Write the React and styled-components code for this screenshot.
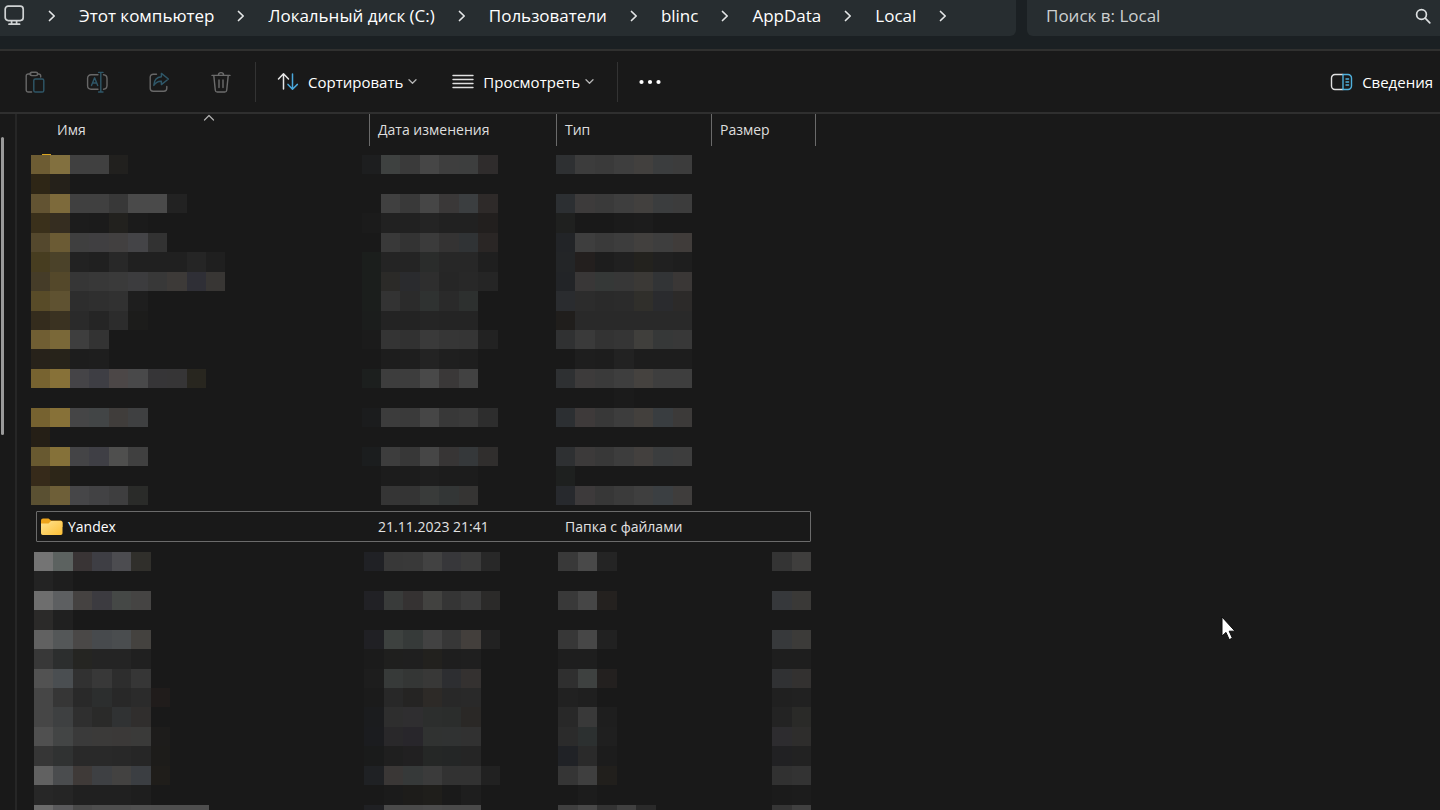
import React from 'react'
import styled, { createGlobalStyle } from 'styled-components'

const GlobalStyle = createGlobalStyle`
  * {
    box-sizing: border-box;
  }
  body {
    margin: 0;
    overflow: hidden;
    background: #191919;
    color: #fff;
    font-family: "Open Sans", "Noto Sans", sans-serif;
  }
  button, input {
    font-family: inherit;
    color: inherit;
    background: none;
    border: none;
    padding: 0;
    margin: 0;
  }
`

const Window = styled.div`
  height: 100vh;
  display: flex;
  flex-direction: column;
  overflow: hidden;
`
const TopBar = styled.header`
  display: flex;
  gap: 11px;
  height: 51px;
  flex-shrink: 0;
  padding-bottom: 13px;
  background: #1b2023;
  border-bottom: 2px solid #30302f;
`
const AddressBar = styled.nav`
  flex: 1;
  display: flex;
  align-items: center;
  gap: 23px;
  height: 36px;
  padding: 0 0 4px 4px;
  background: #272d30;
  border-radius: 0 0 6px 0;
`
const Crumb = styled.a`
  font-size: 17px;
  line-height: 24px;
  color: #fff;
  text-decoration: none;
  white-space: nowrap;
`
const SearchBox = styled.label`
  display: flex;
  align-items: center;
  width: 413px;
  height: 36px;
  padding: 0 9px 4px 19px;
  background: #272d30;
  border-radius: 0 0 0 6px;
`
const SearchInput = styled.input`
  flex: 1;
  min-width: 0;
  font-size: 17px;
  line-height: 24px;
  outline: none;
  &::placeholder {
    color: #cdd0d1;
    opacity: 1;
  }
`
const Toolbar = styled.div`
  display: flex;
  align-items: center;
  height: 63px;
  flex-shrink: 0;
  padding: 0 7px 0 24px;
  border-bottom: 2px solid #2f2f2f;
`
const IconGroup = styled.div`
  display: flex;
  gap: 40px;
`
const IconButton = styled.button`
  display: flex;
  opacity: ${(props) => (props.disabled ? 0.45 : 1)};
`
const Divider = styled.span`
  width: 1px;
  height: 40px;
  margin: 0 21px 0 23px;
  background: #333;
`
const TextButton = styled.button`
  display: flex;
  align-items: center;
  gap: 9px;
  font-size: 15px;
  line-height: 22px;
  margin-right: ${(props) => (props.$spaced ? '35px' : '0')};
  margin-left: ${(props) => (props.$right ? 'auto' : '0')};
`
const DropLabel = styled.span`
  display: flex;
  align-items: center;
  gap: 5px;
`
const Body = styled.div`
  flex: 1;
  min-height: 0;
  display: flex;
`
const Side = styled.aside`
  width: 17px;
  padding: 23px 0 0 1px;
  border-right: 2px solid #262626;
`
const Thumb = styled.div`
  width: 3px;
  height: 298px;
  border-radius: 2px;
  background: #9a9a9a;
`
const Files = styled.table`
  width: 799px;
  height: max-content;
  table-layout: fixed;
  border-collapse: separate;
  border-spacing: 0;
  font-size: 14px;
  line-height: 20px;
`
const Head = styled.th`
  position: relative;
  width: ${(props) => props.$w};
  height: 32px;
  padding: 0 0 0 ${(props) => (props.$first ? '40px' : '8px')};
  text-align: left;
  font-weight: 400;
  color: #dedede;
  border-right: 1px solid #6a6a6a;
`
const SortMark = styled.span`
  position: absolute;
  top: 0;
  left: 186px;
  display: flex;
`
const Row = styled.tr`
  position: relative;
  height: 31px;
  &::after {
    content: "";
    position: absolute;
    top: 0;
    bottom: 0;
    left: 19px;
    right: 5px;
    border: 1px solid #6b6b6b;
    border-radius: 1px;
  }
`
const Cell = styled.td`
  padding: 0 0 0 8px;
  color: #e2e2e2;
  white-space: nowrap;
`
const NameCell = styled(Cell)`
  padding-left: 24px;
  color: #fff;
`
const FileName = styled.div`
  display: flex;
  align-items: center;
  gap: 5px;
`
const MosaicCell = styled.td`
  padding: ${(props) => (props.$last ? '10px 0 0 17px' : '9px 0 6px 14px')};
`
const Blocks = styled.svg`
  display: block;
  overflow: visible;
`

const crumbs = ['Этот компьютер', 'Локальный диск (C:)', 'Пользователи', 'blinc', 'AppData', 'Local']

// name | date | type | size, "." is an empty block, two digits are a grey
const columnStart = [0, 17, 27, 38]

const folders = [
  '6d5c33 82703f 40 40 21201e | 1d1e1f 3e4140 3a 46 3e 3d3e3e 2f2c2c | 2e3032 3c 3a 3e 42403e 3b3d3e 3c',
  '2e2616 25211a',
  '625332 7d6a3b 40 40 38 4a 4a 22 | . 40 39 46 3a3838 3b3e40 2e2a29 | 2c2f32 3d3b3b 3a 3e 42403e 3b3d3e 3c',
  '3a301b 352d20 1c 1b 22211e 1b | 1b 21 21 24 21 21 221f1e | 1f201f . . 1b 1c',
  '54482d 6b5b34 3f 403f41 424040 444447 32 | . 39 33 3b 343333 303335 2a2625 | 222427 3e 3a 3d 42403e 3e 403c3a',
  '473d20 4b4229 22 20 28 20 20 20 25 1f | 1b1e1c 24 24 2a2c2b 27 27 1f | 232527 231f1e 1d 20 23221e 20 1e',
  '453c28 54482a 36 38 3a 3c3c3e 38 3d3a38 2f2f36 383634 | 1b1e1c 2b2a28 2a2b2e 2e 26 28 25 | 222427 393737 353837 37 3b3936 323436 3a3736',
  '584b28 5f5231 2d 2f 31 1e | 1b1e1c 33 2b 2f3231 2a 2d302f | 2a2c2f 2c 2a 2b 302f2b 2a2b2e 2c2a29',
  '342c1d 3a3221 2a 25 2c 1c1c1b | 1b1d1c 23 23 25 24 24 | 201e1c 29 29 29 29 29 29',
  '705e33 7a6838 3e 33 | 1b 34 31 3a 36 35 22 | 303132 3a 33 35 403f3c 363838 38',
  '27221a 27231a 1d 1e | . 1d 1e 23 1f 1e | . 1e 1d 22 1d 1d 1d',
  '776330 877138 454447 3e3e44 4c4747 49494a 363537 363536 28261f | 1c1f1e 3d 3d 49 3a3838 42 | 2e3032 3d3b3b 3a 3e 45423f 3e 3e',
  '. | . | . . . 1b',
  '766230 877138 454546 424546 403d3b 3f4041 | 1b1c1d 3c 3a 46 38 3a 2d | 2c2f32 3e3a3a 38 3d 43403d 393d40 3c3a39',
  '251f16',
  '685930 857139 444446 3f3f45 4f4f4e 40 | 1b1d1e 3d 37 46 373535 35383a 302e2d | 2e3032 3c3a3a 38 3d 43403e 3b3d3e 3d',
  '362a1a 2d2618 | . 1c 1c 1e 1c 1c | 1e201f',
  '5a5032 6e5f38 464648 424244 3e3e3f 2a2b29 | . 35 34 393b3a 333636 353433 | 27292d 3d3a3b 37 3b 3f 3b3f42 3f3d3c',
]

const files = [
  '747474 5c6260 393435 3e3e44 4c4c50 302f2b | 202125 38 39 42 37373a 3b 28 | 39 49 24 | 34 3f3e3d',
  '23 1e',
  '6e 5d5f61 454241 3c3b40 454846 454443 | 212125 393b3a 353232 424240 35 3b 2b2a29 | 39 46 24211f | 36383b 3a3937',
  '2b2a29 20',
  '61 545758 4a4847 474a4d 4a4d4f 44423f | 202024 3d413f 363a39 42 37 433f3c 22 | 37 47 21 | 37393b 3c3b39',
  '38 2c2e2e 252522 24 24 20 | 1b 1f1f1e 1f 22211e 1e 1f | 1e 1e | 1e 1e',
  '52 4a4e51 31 38 2d 36 | 1d 373a39 343635 383837 2d2e31 343130 | 2f 3e4140 23201f | 303133 333130',
  '46 36 29 2c2e2e 28 2b 201c1b | 1b 28 252423 2d2a27 28 29 | 21 1f | 20 21',
  '46 3e4041 2f 2a2a29 303233 302e2d | 1b1c1e 2e 2f2e30 2c2e2d 2b2d2c 2a2826 | 28 39 1e | 23 2a2a28',
  '50 434545 3a 3b3a39 3b3938 3a3a39 1d1c1b | 1b1c1f 29282a 28262b 303231 303232 31 | 2b 2c3030 1f | 2d2c2f 2e2d2c',
  '36 303232 29 29 28 26 1d1c1a | 1a1b1b 1f 212021 252726 242626 25 | 202226 2a 1c | 212123 22',
  '61 4a4c4e 3f3a38 3e4043 434241 3b3e42 1f1d1a | 1f2124 3a3736 363939 3b 32 32 21 | 35 3f 211f1c | 31 33',
  '27 25 20 20 20 1e | . 1b 1d1c1a 1f1e1b 1a 1e | . 1c | 1b 1c',
  '6b 5a5a5c 4a 4e 4e 50 4f 4e 4e | 1f2023 4a 4a 4c 4a 4a | 3f 48 33 40 2a | 35 40',
]

const toColor = (token) => '#' + (token.length === 2 ? token.repeat(3) : token)

const Mosaic = ({ rows, columns, width, height, children }) => (
  <Blocks
    width={width}
    height={height}
    viewBox={`0 0 ${columns} ${rows.length}`}
    preserveAspectRatio="none"
    shapeRendering="crispEdges"
    aria-hidden="true"
  >
    {children}
    {rows.map((row, y) =>
      row.split('|').map((part, col) =>
        part.trim().split(' ').map((token, x) =>
          token === '.' ? null : (
            <rect
              key={`${y}-${col}-${x}`}
              x={columnStart[col] + x}
              y={y}
              width="1"
              height="1"
              fill={toColor(token)}
            />
          )
        )
      )
    )}
  </Blocks>
)

const Svg = ({ w = 22, h = 22, children, stroke = '#fff', sw = 1.4 }) => (
  <svg width={w} height={h} viewBox={`0 0 ${w} ${h}`} fill="none" stroke={stroke} strokeWidth={sw}
    strokeLinecap="round" strokeLinejoin="round" aria-hidden="true">
    {children}
  </svg>
)

const ChevronRight = () => (
  <Svg w={8} h={12} sw={1.7} stroke="#e4e6e7"><path d="M1.5 1.5 6.2 6 1.5 10.5" /></Svg>
)
const ChevronDown = () => (
  <Svg w={9} h={8} sw={1.3} stroke="#b5b5b5"><path d="M1 1.8 4.5 5.2 8 1.8" /></Svg>
)
const MonitorIcon = () => (
  <Svg w={21} h={22} sw={1.7} stroke="#cfd2d3">
    <rect x="1.2" y="1.2" width="18" height="14.4" rx="3" />
    <path d="M7.6 15.8v3M12.6 15.8v3M5 19.200h10.6" />
  </Svg>
)
const PasteIcon = () => (
  <Svg stroke="#c8c8c8">
    <path d="M7 3H4.2A2 2 0 0 0 2.2 5v14a2 2 0 0 0 2 2h3.4M13.5 3h1.2a2 2 0 0 1 2 2v1" />
    <rect x="6" y="1.2" width="7.6" height="3.4" rx="1.6" />
    <rect x="9.8" y="8" width="10" height="13" rx="1.6" stroke="#4aa3c9" />
  </Svg>
)
const RenameIcon = () => (
  <Svg stroke="#c8c8c8">
    <path d="M12 3.8H5a3.4 3.4 0 0 0-3.4 3.4v7.6A3.4 3.4 0 0 0 5 18.200h7M17.500 3.800A3.800 3.800 0 0 1 21 7.500v7a3.800 3.800 0 0 1-3.500 3.700" />
    <path d="M5.500 14.600 8.600 6.800l3.100 7.800M6.600 12h4M14.800 1.600v19.200M12.600 1.400h4.400M12.600 21h4.400" stroke="#4aa3c9" />
  </Svg>
)
const ShareIcon = () => (
  <Svg stroke="#c8c8c8">
    <path d="M8.500 3.200H5.200a3 3 0 0 0-3 3v11a3 3 0 0 0 3 3h10.600a3 3 0 0 0 3-3v-1.800" />
    <path d="M13.400 2.400 20.400 8l-7 5.600v-3.400c-3.600-.2-5.800 1.200-7.600 4.200.2-5 2.800-8.200 7.600-8.600z" stroke="#4aa3c9" />
  </Svg>
)
const TrashIcon = () => (
  <Svg stroke="#d0d0d0">
    <path d="M2 4.400h18M8.400 4.200a2.600 2.600 0 0 1 5.200 0M3.800 4.600l1.500 14.600a2 2 0 0 0 2 1.800h7.400a2 2 0 0 0 2-1.800l1.500-14.600M9 9v7.600M13 9v7.600" />
  </Svg>
)
const SortIcon = () => (
  <Svg stroke="#e6e6e6" sw={1.5}>
    <path d="M6.500 18V3M1.500 8l5-5.200 5 5.200" />
    <path d="M15.500 3v15M11 13.400l4.500 4.800 4.900-4.800" stroke="#4aa8dc" />
  </Svg>
)
const ViewIcon = () => (
  <Svg stroke="#e0e0e0" sw={1.4}>
    <path d="M1 4.500h20M1 8.500h20M1 12.500h20M1 16.500h20" />
  </Svg>
)
const DetailsIcon = () => (
  <Svg w={23} h={18} stroke="#e0e0e0">
    <path d="M13 1.500H5A3.500 3.500 0 0 0 1.500 5v8A3.500 3.500 0 0 0 5 16.500h8" />
    <path d="M13 1.500h5A3.500 3.500 0 0 1 21.500 5v8a3.500 3.500 0 0 1-3.500 3.500h-5zM16 6h2.600M16 9h2.600M16 12h2.600" stroke="#4fb0dc" />
  </Svg>
)
const FolderIcon = () => (
  <svg width="22" height="18" viewBox="0 0 22 18" aria-hidden="true">
    <defs>
      <linearGradient id="folder" x1="0" y1="0" x2="1" y2="1">
        <stop offset="0" stopColor="#ffe391" />
        <stop offset="1" stopColor="#fcbf35" />
      </linearGradient>
    </defs>
    <path d="M0 2.500A2 2 0 0 1 2 .5h5.500l2.500 2h9.500a2 2 0 0 1 2 2V9H0z" fill="#eda41c" />
    <path d="M0 5.500h7.500L10 3h9.800A1.700 1.700 0 0 1 21.500 4.700v10.600A1.700 1.700 0 0 1 19.800 17H1.700A1.700 1.700 0 0 1 0 15.300z" fill="url(#folder)" />
  </svg>
)

const Pointer = styled.svg`
  position: absolute;
  left: 1220px;
  top: 614px;
`

export default function App() {
  return (
    <Window>
      <GlobalStyle />
      <TopBar>
        <AddressBar aria-label="Путь">
          <MonitorIcon />
          {crumbs.map((name) => (
            <React.Fragment key={name}>
              <ChevronRight />
              <Crumb href="#">{name}</Crumb>
            </React.Fragment>
          ))}
          <ChevronRight />
        </AddressBar>
        <SearchBox>
          <SearchInput type="text" placeholder="Поиск в: Local" aria-label="Поиск в: Local" />
          <Svg w={16} h={16} sw={1.7} stroke="#dcdfe0">
            <circle cx="6.500" cy="6.500" r="4.900" />
            <path d="m10.200 10.200 4.600 4.600" />
          </Svg>
        </SearchBox>
      </TopBar>

      <Toolbar>
        <IconGroup>
          <IconButton disabled aria-label="Вставить"><PasteIcon /></IconButton>
          <IconButton disabled aria-label="Переименовать"><RenameIcon /></IconButton>
          <IconButton disabled aria-label="Поделиться"><ShareIcon /></IconButton>
          <IconButton disabled aria-label="Удалить"><TrashIcon /></IconButton>
        </IconGroup>
        <Divider />
        <TextButton $spaced>
          <SortIcon />
          <DropLabel>
            Сортировать
            <ChevronDown />
          </DropLabel>
        </TextButton>
        <TextButton>
          <ViewIcon />
          <DropLabel>
            Просмотреть
            <ChevronDown />
          </DropLabel>
        </TextButton>
        <Divider />
        <IconButton aria-label="Дополнительно">
          <svg width="22" height="6" viewBox="0 0 22 6" fill="#fff" aria-hidden="true">
            <circle cx="2.500" cy="3" r="2.100" />
            <circle cx="11" cy="3" r="2.100" />
            <circle cx="19.500" cy="3" r="2.100" />
          </svg>
        </IconButton>
        <TextButton $right>
          <DetailsIcon />
          Сведения
        </TextButton>
      </Toolbar>

      <Body>
        <Side>
          <Thumb />
        </Side>
        <Files>
          <thead>
            <tr>
              <Head $w="353px" $first>
                Имя
                <SortMark>
                  <Svg w={12} h={8} sw={1.2} stroke="#b0b0b0"><path d="M1.500 6 6 1.500 10.500 6" /></Svg>
                </SortMark>
              </Head>
              <Head $w="187px">Дата изменения</Head>
              <Head $w="155px">Тип</Head>
              <Head $w="104px">Размер</Head>
            </tr>
          </thead>
          <tbody>
            <tr>
              <MosaicCell colSpan={4}>
                <Mosaic rows={folders} columns={34} width={661} height={350}>
                  <rect x="0.57" y="-0.06" width="0.46" height="0.12" fill="#d9a520" />
                </Mosaic>
              </MosaicCell>
            </tr>
            <Row>
              <NameCell>
                <FileName>
                  <FolderIcon />
                  Yandex
                </FileName>
              </NameCell>
              <Cell>21.11.2023 21:41</Cell>
              <Cell>Папка с файлами</Cell>
              <Cell />
            </Row>
            <tr>
              <MosaicCell colSpan={4} $last>
                <Mosaic rows={files} columns={40} width={777} height={272} />
              </MosaicCell>
            </tr>
          </tbody>
        </Files>
      </Body>

      <Pointer width="18" height="28" viewBox="0 0 18 28" aria-hidden="true">
        <path d="M2 3v19l4-3.600 3.200 7.200 3.200-1.400-3.200-7H15z" fill="#fff" stroke="#0c0c0c" />
      </Pointer>
    </Window>
  )
}
